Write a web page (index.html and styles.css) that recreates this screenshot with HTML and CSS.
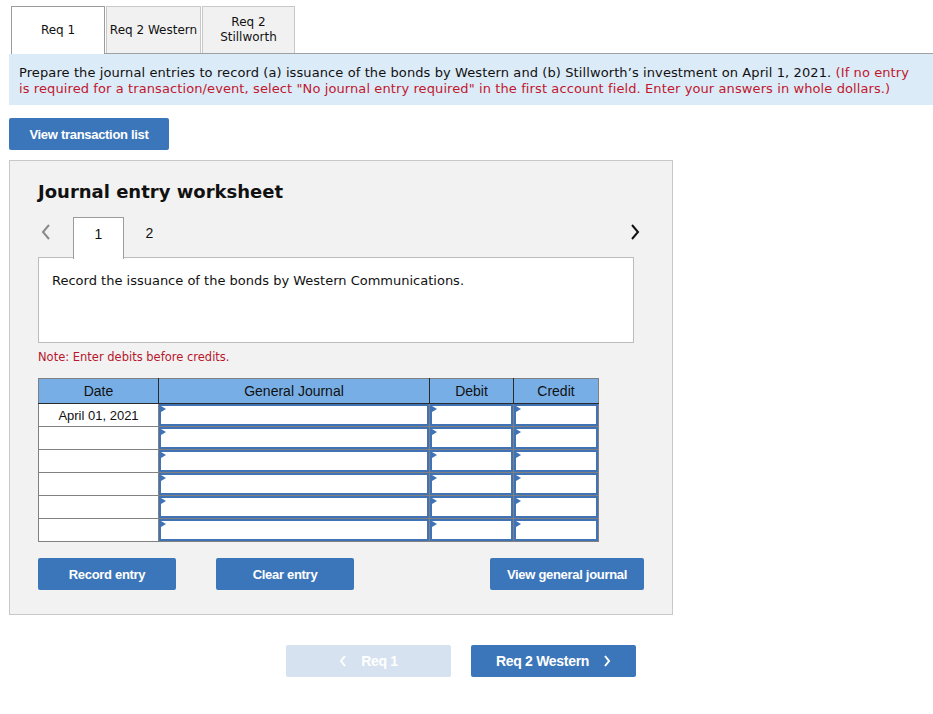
FILE: index.html
```html
<!DOCTYPE html>
<html lang="en">
  <head>
    <meta charset="UTF-8" />
    <title>Journal entry worksheet</title>
    <link rel="stylesheet" href="styles.css">
  </head>
  <body>
    <div class="page">
      <!-- 문제 탭 -->
      <div class="tabs">
        <div class="tab active">Req 1</div>
        <div class="tab wide">Req 2 Western</div>
        <div class="tab narrow">Req 2<br>Stillworth</div>
      </div>

      <div class="intro">
        Prepare the journal entries to record (a) issuance of the bonds by Western and (b) Stillworth’s investment on April 1, 2021.
        <span class="hint">(If no entry is required for a transaction/event, select "No journal entry required" in the first account field. Enter your answers in whole dollars.)</span>
      </div>

      <button class="btn" id="viewlist">View transaction list</button>

      <!-- 분개 워크시트 -->
      <div class="sheet">
        <h2 class="sheet-title">Journal entry worksheet</h2>

        <div class="steps">
          <span class="arrow prev">
            <svg width="10" height="16" viewBox="0 0 10 16"><polyline points="8,1 2,8 8,15" fill="none" stroke="#8a8a8a" stroke-width="2" /></svg>
          </span>
          <div class="step current">1</div>
          <div class="step">2</div>
          <span class="arrow next">
            <svg width="10" height="16" viewBox="0 0 10 16"><polyline points="2,1 8,8 2,15" fill="none" stroke="#111" stroke-width="2" /></svg>
          </span>
        </div>

        <div class="desc">Record the issuance of the bonds by Western Communications.</div>

        <p class="note">Note: Enter debits before credits.</p>

        <table class="journal">
          <thead>
            <tr>
              <th class="c-date">Date</th>
              <th class="c-acct">General Journal</th>
              <th class="c-amt">Debit</th>
              <th class="c-amt2">Credit</th>
            </tr>
          </thead>
          <tbody id="rows"></tbody>
        </table>

        <div class="actions">
          <button class="btn act">Record entry</button>
          <button class="btn act clear">Clear entry</button>
          <button class="btn act gj">View general journal</button>
        </div>
      </div>

      <!-- 아래 이동 버튼 -->
      <div class="bottom-nav">
        <button class="btn navbtn off">
          <svg width="8" height="12" viewBox="0 0 8 12"><polyline points="6,1 2,6 6,11" fill="none" stroke="#fff" stroke-width="2" /></svg>
          <span>Req 1</span>
        </button>
        <button class="btn navbtn">
          <span>Req 2 Western</span>
          <svg width="8" height="12" viewBox="0 0 8 12"><polyline points="2,1 6,6 2,11" fill="none" stroke="#fff" stroke-width="2" /></svg>
        </button>
      </div>
    </div>

    <script>
      // 빈 분개 줄 6개 만들기
      const rows = document.getElementById("rows");
      for (let i = 0; i < 6; i++) {
        const tr = document.createElement("tr");
        tr.innerHTML =
          '<td class="date">' + (i == 0 ? "April 01, 2021" : "") + "</td>" +
          '<td class="inp"><div class="box"></div></td>' +
          '<td class="inp"><div class="box"></div></td>' +
          '<td class="inp"><div class="box"></div></td>';
        rows.appendChild(tr);
      }
    </script>
  </body>
</html>
```

FILE: styles.css
```css
body {
  margin: 0;
  font-family: "DejaVu Sans", Verdana, sans-serif;
  color: #111;
  background: white;
}

.page {
  padding: 6px 0 40px 9px;
}

/* 탭 */
.tabs {
  display: flex;
  align-items: flex-end;
  gap: 1px;
  margin-left: 2px;
  border-bottom: 1px solid #a0a0a0;
}
.tab {
  width: 94px;
  height: 47px;
  box-sizing: border-box;
  border: 1px solid #c8c8c8;
  border-bottom: none;
  background-color: #f1f1f1;
  font-size: 12px;
  line-height: 15px;
  display: flex;
  align-items: center;
  justify-content: center;
  text-align: center;
}
.tab.active {
  background-color: white;
  border-color: #9c9c9c;
  height: 48px;
  margin-bottom: -1px;
}
.tab.wide {
  width: 95px;
}
.tab.narrow {
  width: 93px;
}

/* 안내 문구 */
.intro {
  background-color: #dcebf8;
  padding: 11px 10px 8px 10px;
  font-size: 13px;
  line-height: 16px;
  letter-spacing: 0.1px;
}
.hint {
  color: #c0182e;
}

/* 파란 버튼 */
.btn {
  background-color: #3b76ba;
  color: white;
  border: none;
  border-radius: 2px;
  height: 32px;
  font-family: "Liberation Sans Narrow", "Liberation Sans", Arial, sans-serif;
  font-weight: bold;
  font-size: 13px;
  letter-spacing: -0.3px;
  cursor: pointer;
}
#viewlist {
  display: block;
  width: 160px;
  margin-top: 13px;
}

/* 워크시트 */
.sheet {
  margin-top: 10px;
  width: 664px;
  box-sizing: border-box;
  background-color: #f2f2f2;
  border: 1px solid #c8c8c8;
  padding: 20px 0 24px 28px;
}
.sheet-title {
  margin: 0;
  font-size: 18px;
  line-height: 22px;
  font-weight: bold;
}

.steps {
  display: flex;
  align-items: flex-end;
  margin-top: 14px;
  width: 596px;
  height: 41px;
  position: relative;
  z-index: 1;
}
.arrow {
  display: flex;
  align-self: flex-start;
  margin-top: 7px;
  height: 16px;
}
.prev {
  margin-left: 3px;
}
.next {
  margin-left: auto;
  margin-right: -6px;
}
.step {
  width: 51px;
  height: 41px;
  box-sizing: border-box;
  display: flex;
  align-items: flex-start;
  justify-content: center;
  font-family: "Liberation Sans", Arial, sans-serif;
  font-size: 14px;
  padding-top: 8px;
}
.step.current {
  margin-left: 22px;
  height: 42px;
  margin-bottom: -1px;
  background-color: white;
  border: 1px solid #9c9c9c;
  border-bottom: none;
}

.desc {
  width: 596px;
  height: 86px;
  box-sizing: border-box;
  margin-top: -1px;
  background-color: white;
  border: 1px solid #bdbdbd;
  padding: 15px 13px 0;
  font-size: 13px;
  line-height: 16px;
}

.note {
  margin: 7px 0 0 0;
  color: #b8162c;
  font-size: 11.5px;
  line-height: 14px;
}

/* 분개 표 */
.journal {
  margin-top: 14px;
  border-collapse: collapse;
  border: 1px solid #808080;
  font-family: "Liberation Sans", Arial, sans-serif;
  font-size: 14px;
}
.journal th {
  background-color: #78aee6;
  font-weight: normal;
  height: 24px;
  padding: 0;
  border: 1px solid #2b2b2b;
  border-top-color: #808080;
}
.journal th:first-child {
  border-left-color: #808080;
}
.journal th:last-child {
  border-right-color: #808080;
}
.c-date {
  width: 119px;
}
.c-acct {
  width: 270px;
}
.c-amt {
  width: 83px;
}
.c-amt2 {
  width: 84px;
}
.journal td {
  height: 22px;
  padding: 0;
  border: 1px solid #808080;
  background-color: white;
}
.date {
  text-align: center;
  font-size: 13px;
}
.inp .box {
  position: relative;
  height: 18px;
  border: 2px solid #3f73b5;
  background-color: white;
}
.inp .box::before {
  content: "";
  position: absolute;
  top: 0;
  left: 0;
  border-top: 3px solid transparent;
  border-bottom: 3px solid transparent;
  border-left: 5px solid #3f73b5;
}

.actions {
  display: flex;
  margin-top: 16px;
  width: 606px;
}
.act {
  width: 138px;
}
.clear {
  margin-left: 40px;
}
.gj {
  width: 154px;
  margin-left: auto;
}

/* 아래 이동 */
.bottom-nav {
  display: flex;
  gap: 20px;
  margin: 30px 0 0 277px;
}
.navbtn {
  width: 165px;
  height: 32px;
  display: flex;
  align-items: center;
  justify-content: center;
  gap: 14px;
  font-size: 14px;
}
.navbtn.off {
  background-color: #d6e2f0;
}
```
